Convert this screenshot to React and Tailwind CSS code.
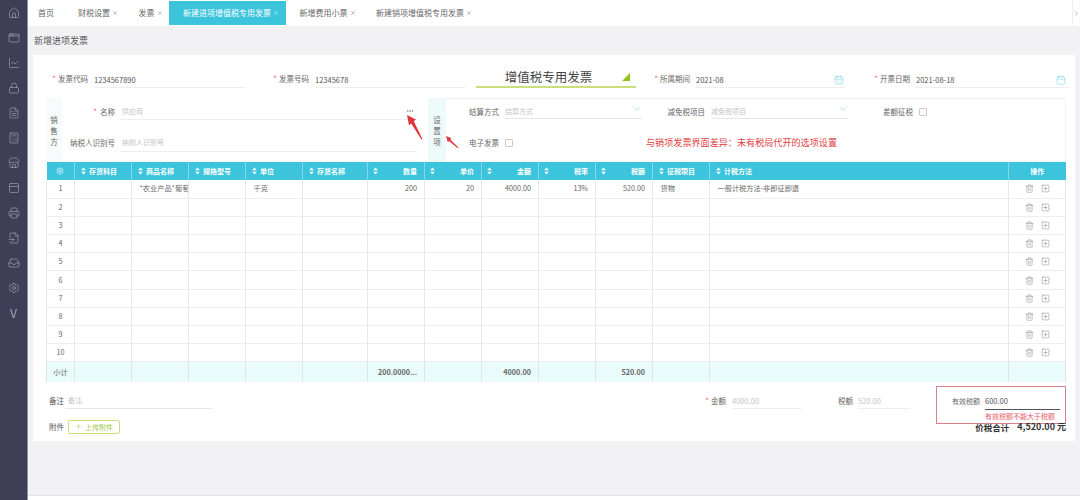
import React from 'react';
import {
  House, AppWindow, ChartLine, Lock, FileText, Calculator, Store, PanelTop,
  Printer, FileInput, Inbox, Settings, Calendar, CalendarDays, ChevronDown, ChevronRight,
  Trash2, SquarePlus, Plus, X, Ellipsis,
} from 'lucide-react';

const navIcons = [House, AppWindow, ChartLine, Lock, FileText, Calculator, Store, PanelTop, Printer, FileInput, Inbox, Settings];

const tabs = [
  { name: '财税设置' },
  { name: '发票' },
  { name: '新建进项增值税专用发票', active: true },
  { name: '新增费用小票' },
  { name: '新建销项增值税专用发票' },
];

const columns = [
  { name: '存货科目', w: 'w-[57px]' },
  { name: '商品名称', w: 'w-[57px]' },
  { name: '规格型号', w: 'w-[57px]' },
  { name: '单位', w: 'w-[57px]' },
  { name: '存货名称', w: 'w-[65px]' },
  { name: '数量', w: 'w-[57px]', right: true },
  { name: '单价', w: 'w-[57px]', right: true },
  { name: '金额', w: 'w-[57px]', right: true },
  { name: '税率', w: 'w-[57px]', right: true },
  { name: '税额', w: 'w-[57px]', right: true },
  { name: '征税项目', w: 'w-[57px]' },
  { name: '计税方法', w: 'w-[299px]' },
];

const firstRow = ['', '*农业产品*葡萄', '', '千克', '', '200', '20', '4000.00', '13%', '520.00', '货物', '一般计税方法-非即征即退'];
const totalRow = ['', '', '', '', '', '200.0000...', '', '4000.00', '', '520.00', '', ''];

const Star = () => <span className="text-[#ef6b7a] text-[8px] leading-none">*</span>;

const Checkbox = () => <span className="w-[8px] h-[8px] border border-[#c9c9c9] rounded-[1px] bg-white" />;

const SortIcon = () => (
  <svg width="5" height="8" viewBox="0 0 5 8" className="shrink-0 text-white">
    <path d="M2.5 0.5 L4.8 3.2 L0.2 3.2 Z M0.2 4.8 L4.8 4.8 L2.5 7.5 Z" fill="currentColor" />
  </svg>
);

const TopField = ({ width, labelWidth, label, value, icon: Icon, iconColor }) => (
  <div className={`flex items-center h-[18px] shrink-0 ${width}`}>
    <div className={`flex items-center justify-end gap-[2px] text-[7.5px] text-[#666] pr-[6px] shrink-0 whitespace-nowrap ${labelWidth}`}>
      <Star />
      {label}
    </div>
    <div className="flex-1 h-full flex items-center justify-between border-b border-[#eceef0] text-[7.5px] text-[#555] pt-[2px]">
      {value}
      {Icon && <Icon size={10} strokeWidth={1.4} className={iconColor} />}
    </div>
  </div>
);

const SelectField = ({ width, labelWidth, label, placeholder }) => (
  <div className={`flex items-center h-[15px] shrink-0 ${width}`}>
    <div className={`text-[7.5px] text-[#666] text-right pr-[6px] shrink-0 whitespace-nowrap ${labelWidth}`}>{label}</div>
    <div className="flex-1 h-full flex items-center justify-between border-b border-[#e4e6e9] text-[7px] text-[#c4c4c4]">
      {placeholder}
      <ChevronDown size={10} strokeWidth={1.8} className="text-[#8fd6e6] -mt-[4px]" />
    </div>
  </div>
);

const SideLabel = ({ chars, className }) => (
  <div className={`flex flex-col items-center justify-center gap-[2px] text-[7.5px] leading-[9px] text-[#666] ${className}`}>
    {chars.map((c) => <span key={c}>{c}</span>)}
  </div>
);

const HeadCell = ({ col }) => (
  <th className={`${col.w} p-0 border-r border-[#7fd9e8] font-bold text-[7px] text-white`}>
    <div className={`flex items-center px-[5px] ${col.right ? 'justify-between pr-[7px]' : 'gap-[3px] pl-[6px]'}`}>
      <SortIcon />
      <span>{col.name}</span>
    </div>
  </th>
);

export default function App() {
  return (
    <div className="flex w-[1080px] h-[500px] overflow-hidden bg-[#f2f2f5]" style={{ fontFamily: '"Noto Sans CJK SC", "Noto Sans", sans-serif' }}>
      <aside className="w-[28px] shrink-0 bg-[#3f3e57] border-r border-[#8d8da0] flex flex-col items-center pt-[7px] gap-[13px] text-[#a3a3b6]">
        {navIcons.map((Icon, i) => <Icon key={i} size={12} strokeWidth={1.3} />)}
        <span className="text-[12px] leading-[12px]">V</span>
      </aside>

      <main className="flex-1 min-w-0 flex flex-col">
        <nav className="h-[26px] shrink-0 bg-white flex items-center text-[8px] text-[#666]">
          <div className="px-[10px]">首页</div>
          {tabs.map((tab) => (
            <div key={tab.name} className={`h-[24px] flex items-center pl-[14px] pr-[6.5px] ${tab.active ? 'bg-[#3cc4dc] text-white' : ''}`}>
              {tab.name}
              <X size={6} strokeWidth={1.6} className="ml-[2px]" />
            </div>
          ))}
          <div className="ml-auto h-full w-[8px] border-l border-[#eeeeee] flex items-center">
            <ChevronRight size={7} strokeWidth={1.6} />
          </div>
        </nav>

        <div className="h-[29px] shrink-0 flex items-center pl-[6px] text-[9px] text-[#555]">新增进项发票</div>

        <section className="w-[1042px] h-[386px] shrink-0 ml-[5px] bg-white pl-[13px] pr-[9px] pt-[15px]">
          {/* top fields */}
          <div className="flex items-center">
            <TopField width="w-[199px]" labelWidth="w-[48px]" label="发票代码" value="1234567890" />
            <div className="w-[21px] shrink-0" />
            <TopField width="w-[199px]" labelWidth="w-[49px]" label="发票号码" value="12345678" />
            <div className="w-[11px] shrink-0" />
            <div className="relative w-[160px] h-[18px] shrink-0 border-b-2 border-[#c8df7c] pr-[15px] text-center text-[12.5px] leading-[13px] text-[#444]">
              增值税专用发票
              <div className="absolute right-[6px] top-[3px] w-0 h-0 border-l-[8px] border-l-transparent border-b-[8px] border-b-[#8fc31f]" />
            </div>
            <div className="w-[17px] shrink-0" />
            <TopField width="w-[192px]" labelWidth="w-[43px]" label="所属期间" value="2021-08" icon={CalendarDays} iconColor="text-[#7fd3e3] mr-[1px]" />
            <div className="w-[29px] shrink-0" />
            <TopField width="w-[196px]" labelWidth="w-[42px]" label="开票日期" value="2021-08-18" icon={Calendar} iconColor="text-[#7fd3e3] mr-[4px]" />
          </div>

          {/* seller and settings */}
          <div className="relative flex h-[64px] mt-[10px]">
            <SideLabel chars={['销', '售', '方']} className="w-[16px] shrink-0 bg-[#f6fbfb]" />
            <div className="w-[366px] shrink-0 flex flex-col pt-[6px] gap-[16px]">
              <div className="flex items-center h-[16px]">
                <div className="w-[55px] flex items-center justify-end gap-[3px] text-[7.5px] text-[#666] shrink-0 pr-[2px]"><Star />名称</div>
                <div className="ml-[3px] w-[296px] h-full flex items-center justify-between border-b border-[#eceef0] text-[7px] text-[#c4c4c4] pl-[2px]">
                  供应商
                  <Ellipsis size={8} className="text-[#777] mr-[2px] -mt-[2px]" />
                </div>
              </div>
              <div className="flex items-center h-[16px]">
                <div className="w-[55px] pb-[2px] text-right text-[7.5px] text-[#666] shrink-0 pr-[2px] whitespace-nowrap">纳税人识别号</div>
                <div className="ml-[3px] w-[296px] h-full pb-[2px] flex items-center border-b border-[#eceef0] text-[7px] text-[#c4c4c4] pl-[2px]">纳税人识别号</div>
              </div>
            </div>
            <SideLabel chars={['设', '置', '项']} className="w-[18px] shrink-0 bg-[#eefafa]" />
            <div className="flex-1 border-t border-r border-[#f1f2f4] flex flex-col pt-[5px] gap-[16px]">
              <div className="flex items-center">
                <SelectField width="w-[196px]" labelWidth="w-[59px]" label="结算方式" placeholder="结算方式" />
                <div className="w-[25px] shrink-0" />
                <SelectField width="w-[181px]" labelWidth="w-[44px]" label="减免税项目" placeholder="减免税项目" />
                <div className="ml-[35px] flex items-center gap-[6px] text-[7.5px] text-[#666]">差额征税<Checkbox /></div>
              </div>
              <div className="flex items-center h-[16px] text-[7.5px] text-[#666]">
                <div className="w-[59px] text-right pr-[6px]">电子发票</div>
                <Checkbox />
                <div className="ml-[133px] text-[9.1px] text-[#e0403f]">与销项发票界面差异：未有税局代开的选项设置</div>
              </div>
            </div>

            {/* red arrows from the annotation */}
            <svg className="absolute left-[358px] top-[13px]" width="24" height="32" viewBox="0 0 24 32">
              <path d="M3 4 L12 8.5 L9.8 10.3 L18.4 28 L17.4 28.6 L7.2 12.4 L5 14.2 Z" fill="#e0353a" />
            </svg>
            <svg className="absolute left-[398px] top-[36px]" width="16" height="16" viewBox="0 0 16 16">
              <path d="M2 2 L7.5 4.2 L6.3 5.6 L14.4 13.6 L13.8 14.3 L5 7 L3.8 8.2 Z" fill="#e0353a" />
            </svg>
          </div>

          {/* line table */}
          <table className="w-[1020px] table-fixed border-collapse">
            <thead>
              <tr className="h-[18px] bg-[#3cc4dc]">
                <th className="w-[28px] p-0 border-r border-[#7fd9e8]">
                  <Settings size={8} strokeWidth={1.8} className="text-white mx-auto" />
                </th>
                {columns.map((col) => <HeadCell key={col.name} col={col} />)}
                <th className="p-0 font-bold text-[7px] text-white text-center">操作</th>
              </tr>
            </thead>
            <tbody className="text-[7.2px] text-[#666]">
              {[1, 2, 3, 4, 5, 6, 7, 8, 9, 10].map((n) => (
                <tr key={n} className="h-[18.2px] border-b border-[#eceef0]">
                  <td className="p-0 text-center border-x border-[#e6e8eb]">{n}</td>
                  {columns.map((col, i) => (
                    <td key={col.name} className={`p-0 border-r border-[#e6e8eb] whitespace-nowrap overflow-hidden ${col.right ? 'text-right pr-[7px]' : 'text-left pl-[7.5px]'}`}>
                      {n === 1 ? firstRow[i] : ''}
                    </td>
                  ))}
                  <td className="p-0 border-r border-[#e6e8eb]">
                    <div className="flex justify-center gap-[7px] text-[#777]">
                      <Trash2 size={9} strokeWidth={1.2} />
                      <SquarePlus size={9} strokeWidth={1.2} />
                    </div>
                  </td>
                </tr>
              ))}
              <tr className="h-[20px] bg-[#e9fbfa] font-bold">
                <td className="p-0 text-center font-normal border-x border-[#e0e6e8]">小计</td>
                {columns.map((col, i) => (
                  <td key={col.name} className={`p-0 border-r border-[#e0e6e8] ${col.right ? 'text-right pr-[7px]' : ''}`}>{totalRow[i]}</td>
                ))}
                <td className="p-0 border-r border-[#e0e6e8]" />
              </tr>
            </tbody>
          </table>

          {/* footer fields */}
          <div className="flex justify-between w-[1020px]">
            <div className="w-[166px] pl-[3px] pt-[11px] text-[7.5px] text-[#555]">
              <div className="flex items-center h-[16px]">
                <span className="w-[16px] shrink-0">备注</span>
                <span className="flex-1 h-full flex items-center border-b border-[#e4e6e9] text-[7px] text-[#c4c4c4] pl-[3px]">备注</span>
              </div>
              <div className="flex items-center mt-[11px]">
                <span className="w-[19px] shrink-0">附件</span>
                <button className="w-[52px] h-[14px] border border-[#c8df7c] rounded-[2px] flex items-center justify-center gap-[3px] text-[7px] text-[#9ccb3c]">
                  <Plus size={7} strokeWidth={1.4} />上传附件
                </button>
              </div>
            </div>

            <div className="flex flex-col items-end">
              <div className="flex items-start">
                <div className="flex items-center h-[16px] mt-[11px] text-[7.5px] text-[#666]">
                  <Star />
                  <span className="ml-[2px] mr-[6px]">金额</span>
                  <span className="w-[70px] h-full flex items-center border-b border-[#eceef0] text-[7.5px] text-[#c4c4c4]">4000.00</span>
                </div>
                <div className="flex items-center h-[16px] mt-[11px] ml-[36px] text-[7.5px] text-[#666]">
                  <span className="mr-[5px]">税额</span>
                  <span className="w-[52px] h-full flex items-center border-b border-[#eceef0] text-[7.5px] text-[#c4c4c4]">520.00</span>
                </div>
                <div className="ml-[26px] mt-[4px] w-[130px] h-[38px] border border-[#d9808a] pl-[15px] pt-[6px]">
                  <div className="flex items-center h-[17px] text-[7.5px] text-[#666]">
                    <span className="w-[33px] shrink-0 text-[7px]">有效税额</span>
                    <span className="w-[75px] h-full flex items-center border-b border-[#555] text-[#555]">600.00</span>
                  </div>
                  <div className="pl-[33px] pt-[1px] text-[7px] leading-[10px] text-[#ea5a66]">有效税额不能大于税额</div>
                </div>
              </div>
              <div className="-mt-[3px] flex items-center font-bold text-[#333] leading-[12px]">
                <span className="text-[8.5px]">价税合计</span>
                <span className="ml-[8px] text-[9px]">4,520.00 元</span>
              </div>
            </div>
          </div>
        </section>

        <div className="flex-1" />
        <div className="h-[5px] shrink-0 bg-white border-t border-[#e3e3e8]" />
      </main>
    </div>
  );
}
